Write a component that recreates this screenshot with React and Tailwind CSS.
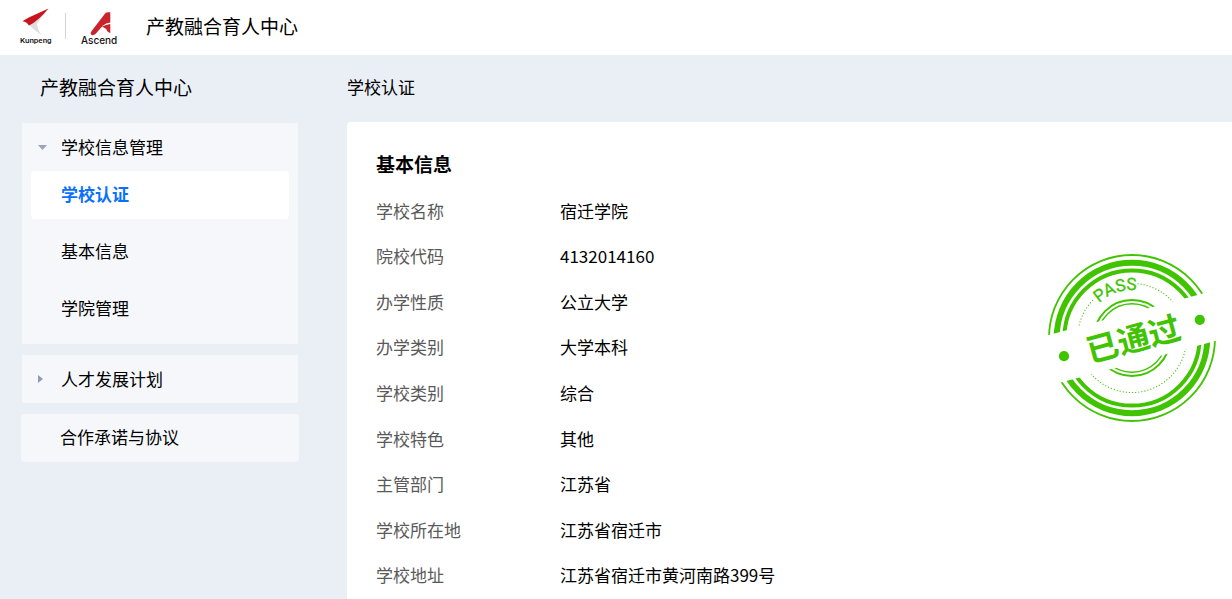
import React from 'react';

const fields = [
    { label: '学校名称', value: '宿迁学院' },
    { label: '院校代码', value: '4132014160' },
    { label: '办学性质', value: '公立大学' },
    { label: '办学类别', value: '大学本科' },
    { label: '学校类别', value: '综合' },
    { label: '学校特色', value: '其他' },
    { label: '主管部门', value: '江苏省' },
    { label: '学校所在地', value: '江苏省宿迁市' },
    { label: '学校地址', value: '江苏省宿迁市黄河南路399号' },
];

const schoolMenu = [
    { name: '学校认证', active: true },
    { name: '基本信息', active: false },
    { name: '学院管理', active: false },
];

const KunpengLogo = () => (
    <svg width="32" height="38" viewBox="0 0 32 38" role="img" aria-label="Kunpeng">
        <path d="M9 18 L27 4 Q18 14 17 17 Q17 21 21.3 28 Q14 23 9 18 Z" fill="#dedede" />
        <path d="M28.5 1.5 L12 9 Q5 12 2.5 14.5 Q6 14 9 18.5 Q14 16 19 11.5 Q24 7 28.5 1.5 Z" fill="#c8141e" />
        <text x="0" y="36" fontSize="8" fontWeight="500" fill="#111" fontFamily="Roboto, sans-serif">Kunpeng</text>
    </svg>
);

const AscendLogo = () => (
    <svg width="38" height="38" viewBox="0 0 38 38" role="img" aria-label="Ascend">
        <path d="M24.5 6 Q25 5 29.3 5.3 L29.3 15.5 Q25 16 22 18.5 L14.5 27 Q12 29 10 27.5 Q9 26 11 23.5 Z" fill="#c9242b" />
        <path d="M21 19.5 Q25 17.5 29.3 17 L29.3 26.2 L26.5 24.5 Q25 21 21 19.5 Z" fill="#c9242b" />
        <text x="0" y="37" fontSize="10" fontWeight="500" fill="#111" fontFamily="Inter, sans-serif">Ascend</text>
    </svg>
);

const PassStamp = () => (
    <svg width="170" height="170" viewBox="-85 -85 170 170" role="img" aria-label="已通过">
        <defs>
            {/* 中间斜带留空 */}
            <clipPath id="stamp-halves">
                <path d="M-100 -100 H100 V-24.5 H-100 Z M-100 24.5 H100 V100 H-100 Z" transform="rotate(-15)" />
            </clipPath>
            <path id="pass-arc" d="M-48 0 A48 48 0 0 1 48 0" />
        </defs>
        <g clipPath="url(#stamp-halves)" fill="none" stroke="#40c400">
            <circle r="83" strokeWidth="1.8" />
            <circle r="75.3" strokeWidth="6" />
            <circle r="67.6" strokeWidth="4" />
            <path d="M5.5 -54.2 A54.5 54.5 0 1 1 -38.5 -38.5" strokeWidth="1.1" strokeDasharray="1.1 2" />
            <circle r="38" strokeWidth="2" />
            <circle r="34.3" strokeWidth="1.4" />
        </g>
        <g fill="#40c400">
            <circle cx="-68" cy="18.2" r="5.1" />
            <circle cx="67.8" cy="-18.2" r="5.1" />
            <text fontSize="17" fontFamily="Roboto, sans-serif" stroke="#40c400" strokeWidth="0.3">
                <textPath href="#pass-arc" startOffset="39">PASS</textPath>
            </text>
            <text
                x="1"
                y="13"
                textAnchor="middle"
                fontSize="32"
                fontWeight="700"
                fontFamily="'Noto Sans CJK SC', sans-serif"
                transform="rotate(-15)"
            >
                已通过
            </text>
        </g>
    </svg>
);

const Sidebar = () => (
    <nav className="w-[276px] shrink-0 flex flex-col gap-[11px]">
        <div className="bg-[#f5f7fb] pb-[11px]">
            <button className="w-full h-12 flex items-center text-left" aria-expanded="true">
                <svg className="ml-4 mr-[14px]" width="9" height="5" viewBox="0 0 9 5">
                    <path d="M0 0 H9 L4.5 5 Z" fill="#9aa5b8" />
                </svg>
                学校信息管理
            </button>
            <div className="flex flex-col gap-[9px] px-[9px]">
                {schoolMenu.map((item) => (
                    <a
                        key={item.name}
                        href="#"
                        className={
                            item.active
                                ? 'h-12 flex items-center pl-[30px] pb-0.5 rounded bg-white font-bold text-[#0a70ff]'
                                : 'h-12 flex items-center pl-[30px] pb-0.5 rounded'
                        }
                    >
                        {item.name}
                    </a>
                ))}
            </div>
        </div>
        <button className="h-12 flex items-center text-left bg-[#f5f7fb]" aria-expanded="false">
            <svg className="ml-4 mr-[18px]" width="5" height="8" viewBox="0 0 5 8">
                <path d="M0 0 V8 L5 4 Z" fill="#8f9caf" />
            </svg>
            人才发展计划
        </button>
        <a href="#" className="h-12 -mx-px flex items-center pl-[39px] pb-0.5 rounded bg-[#f5f7fb]">
            合作承诺与协议
        </a>
    </nav>
);

const App = () => {
    return (
        <div className="min-h-screen flex flex-col bg-[#eaeff6] text-[17px] leading-6 text-black font-['Noto_Sans_CJK_SC',sans-serif]">
            <header className="h-[55px] shrink-0 bg-white flex items-center pl-5 pb-1">
                <KunpengLogo />
                <div className="w-px h-[26px] bg-[#d4d4d4] ml-[13px] mr-[15px]" />
                <AscendLogo />
                <span className="ml-[27px] text-[19px]">产教融合育人中心</span>
            </header>

            <div className="flex-1 flex pl-[22px]">
                <div className="flex flex-col">
                    <h1 className="h-[68px] flex items-center pl-[18px] pb-1 text-[19px]">产教融合育人中心</h1>
                    <Sidebar />
                </div>

                <main className="flex-1 ml-[49px] flex flex-col">
                    <h2 className="h-[67px] flex items-center pb-1">学校认证</h2>
                    <section className="flex-1 bg-white rounded-tl pl-[29px] pr-[15px] pt-[30px]">
                        <h3 className="text-[19px] font-bold">基本信息</h3>
                        <div className="flex justify-between items-start mt-3">
                            {/* 学校信息列表 */}
                            <dl className="h-[410px] grid auto-rows-fr">
                                {fields.map((field) => (
                                    <div key={field.label} className="flex items-center">
                                        <dt className="w-[184px] text-[#5a5a5a]">{field.label}</dt>
                                        <dd>{field.value}</dd>
                                    </div>
                                ))}
                            </dl>
                            <div className="mt-[65px]">
                                <PassStamp />
                            </div>
                        </div>
                    </section>
                </main>
            </div>
        </div>
    );
};

export default App;
